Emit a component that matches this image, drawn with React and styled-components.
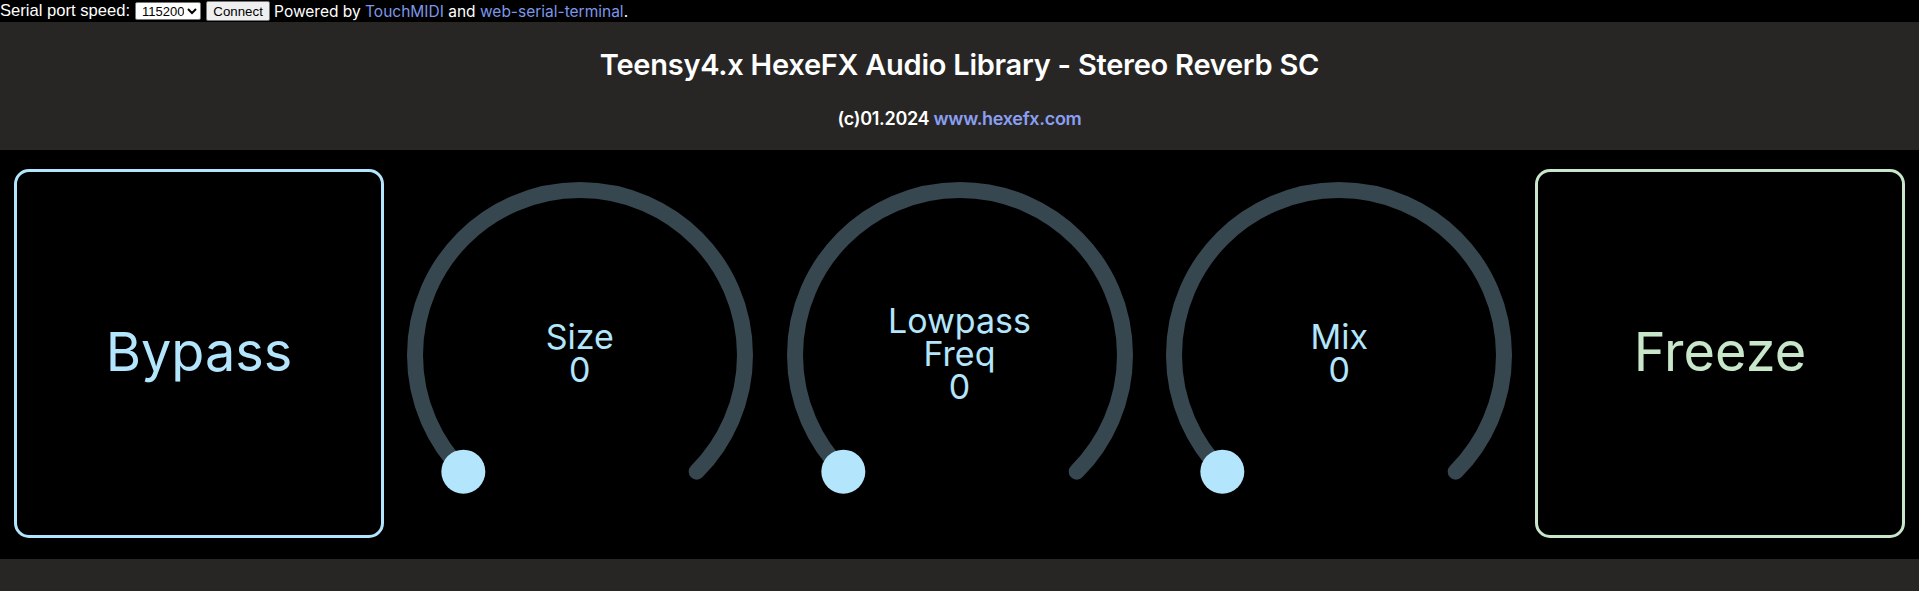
import React from 'react';
import styled, {createGlobalStyle} from 'styled-components';

const GlobalStyle = createGlobalStyle`
    html, body {
        margin: 0;
        padding: 0;
        background: #272625;
    }
    body {
        font-family: "Liberation Sans", Arial, sans-serif;
    }
`;

const LIGHT_BLUE = '#b3e5fc';
const LIGHT_GREEN = '#c8e6c9';
const TRACK = '#37474f';

const TopBar = styled.div`
    background: #000;
    color: #fff;
    height: 22px;
    display: flex;
    align-items: center;
    gap: 5px;
    font-size: 16.6px;
    white-space: nowrap;
`;

const SpeedSelect = styled.select`
    font-family: "Liberation Sans", Arial, sans-serif;
    font-size: 13px;
    height: 18px;
    width: 66px;
    padding: 0 0 0 2px;
    background: #fff;
    color: #000;
    border: 1px solid #767676;
    border-radius: 2px;
`;

const ConnectButton = styled.button`
    font-family: "Liberation Sans", Arial, sans-serif;
    font-size: 13.3px;
    height: 20px;
    width: 64px;
    padding: 0 6px;
    background: #efefef;
    color: #000;
    border: 1px solid #767676;
    border-radius: 2px;
`;

const Powered = styled.span`
    font-family: Inter, "Noto Sans", sans-serif;
    font-size: 15.5px;
    margin-left: -1px;
`;

const Link = styled.a`
    color: ${props => props.light ? '#8b9ff2' : '#7c97e8'};
    text-decoration: none;
`;

const Header = styled.header`
    background: #272625;
    color: #fff;
    text-align: center;
    padding: 26px 0 20px;
    font-family: Inter, "Noto Sans", sans-serif;
`;

const Title = styled.h1`
    margin: 0;
    font-size: 29px;
    line-height: 34px;
    font-weight: 600;
    letter-spacing: -0.25px;
`;

const Subtitle = styled.div`
    margin-top: 26px;
    font-size: 18px;
    line-height: 22px;
    font-weight: 600;
    letter-spacing: -0.3px;
`;

const ControlRow = styled.section`
    background: #000;
    display: flex;
    justify-content: space-between;
    padding: 19px 14px 21px;
    font-family: Inter, "Noto Sans", sans-serif;
`;

const ToggleBox = styled.div`
    box-sizing: border-box;
    width: 370px;
    height: 369px;
    border: 3px solid ${props => props.color};
    border-radius: 15px;
    color: ${props => props.color};
    display: flex;
    align-items: center;
    justify-content: center;
    font-size: 54px;
    padding-bottom: 4px;
`;

const KnobWrap = styled.div`
    position: relative;
    width: 368px;
    height: 369px;
`;

const KnobLabel = styled.div`
    position: absolute;
    left: 0;
    right: 0;
    top: 184px;
    transform: translateY(-50%);
    text-align: center;
    color: ${LIGHT_BLUE};
    font-size: 34px;
    line-height: 33px;
`;

const LabelLine = styled.div`
    height: 33px;
`;

const Footer = styled.div`
    background: #272625;
    height: 40px;
`;

const Knob = ({label}) => {
    const cx = 184, cy = 186, r = 165;
    const a0 = 135 * Math.PI / 180;
    const a1 = 45 * Math.PI / 180;
    const sx = cx + r * Math.cos(a0), sy = cy + r * Math.sin(a0);
    const ex = cx + r * Math.cos(a1), ey = cy + r * Math.sin(a1);
    return (
        <KnobWrap>
            <svg width="368" height="369" viewBox="0 0 368 369">
                <path d={`M ${sx} ${sy} A ${r} ${r} 0 1 1 ${ex} ${ey}`}
                      fill="none" stroke={TRACK} strokeWidth="16" strokeLinecap="round"/>
                <circle cx={sx} cy={sy} r="22" fill={LIGHT_BLUE}/>
            </svg>
            <KnobLabel>
                {label.map((l, i) => <LabelLine key={i}>{l}</LabelLine>)}
                <LabelLine>0</LabelLine>
            </KnobLabel>
        </KnobWrap>
    );
};

export default function App() {
    return (
        <>
            <GlobalStyle/>
            <TopBar>
                <span>Serial port speed:</span>
                <SpeedSelect defaultValue="115200">
                    <option>9600</option>
                    <option>57600</option>
                    <option>115200</option>
                </SpeedSelect>
                <ConnectButton>Connect</ConnectButton>
                <Powered>
                    Powered by <Link href="#">TouchMIDI</Link> and <Link href="#">web-serial-terminal</Link>.
                </Powered>
            </TopBar>
            <Header>
                <Title>Teensy4.x HexeFX Audio Library - Stereo Reverb SC</Title>
                <Subtitle>(c)01.2024 <Link light href="#">www.hexefx.com</Link></Subtitle>
            </Header>
            <ControlRow>
                <ToggleBox color={LIGHT_BLUE}>Bypass</ToggleBox>
                <Knob label={['Size']}/>
                <Knob label={['Lowpass', 'Freq']}/>
                <Knob label={['Mix']}/>
                <ToggleBox color={LIGHT_GREEN}>Freeze</ToggleBox>
            </ControlRow>
            <Footer/>
        </>
    );
}
